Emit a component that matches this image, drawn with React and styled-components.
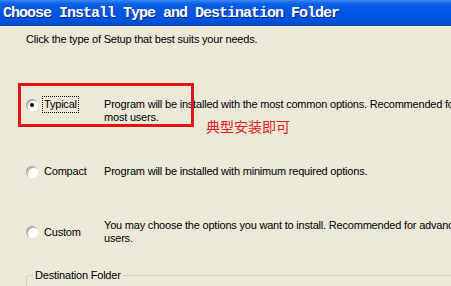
import React from "react";
import styled, { createGlobalStyle } from "styled-components";

const Global = createGlobalStyle`
  html, body { margin: 0; padding: 0; }
  body {
    width: 451px;
    height: 286px;
    overflow: hidden;
    background: #ece9d8;
    font-family: "Liberation Sans", Arial, sans-serif;
    font-size: 11px;
    letter-spacing: -0.2px;
    color: #000;
  }
`;

const Page = styled.div`
  position: relative;
  width: 451px;
  height: 286px;
  overflow: hidden;
  background: #ece9d8;
`;

const TitleBar = styled.div`
  height: 26px;
  display: flex;
  align-items: center;
  padding-left: 3px;
  background: linear-gradient(
    to bottom,
    #3b86f0 0px,
    #0a5fe8 4px,
    #0055e3 12px,
    #0050d8 22px,
    #0043b8 26px
  );
  border-bottom: 1px solid #f4f3ee;
`;

const Title = styled.div`
  font-family: "Liberation Mono", "Courier New", monospace;
  font-weight: bold;
  font-size: 15px;
  letter-spacing: -1px;
  color: #fff;
  white-space: nowrap;
  text-shadow: 1px 1px 0 #0a2a8a;
  padding-top: 1px;
`;

const Content = styled.div`
  display: flex;
  flex-direction: column;
  padding-left: 26px;
`;

const Intro = styled.div`
  margin-top: 6px;
  line-height: 13px;
  white-space: nowrap;
`;

const OptionRow = styled.div`
  display: flex;
  align-items: ${(p) => (p.$center ? "center" : "flex-start")};
  margin-top: ${(p) => p.$gap}px;
`;

const Choice = styled.div`
  width: 78px;
  display: flex;
  align-items: center;
  gap: 6px;
  height: 13px;
  flex: none;
`;

const Radio = styled.span`
  position: relative;
  width: 12px;
  height: 12px;
  border-radius: 50%;
  background: #fff;
  box-shadow: inset 1px 1px 0 #a8a8a0, inset 2px 2px 0 #c8c8c0,
    inset -1px -1px 0 #ffffff;
  flex: none;
  &::after {
    content: "";
    display: ${(p) => (p.$checked ? "block" : "none")};
    position: absolute;
    left: 4px;
    top: 4px;
    width: 4px;
    height: 4px;
    border-radius: 50%;
    background: #000;
  }
`;

const Label = styled.span`
  white-space: nowrap;
  line-height: 13px;
  padding: 1px 1px;
  margin: -2px -2px;
  border: 1px dotted ${(p) => (p.$focus ? "#000" : "transparent")};
`;

const Desc = styled.div`
  display: flex;
  flex-direction: column;
  line-height: 13px;
  white-space: nowrap;
`;

const GroupBox = styled.fieldset`
  margin: 24px 0 0 0;
  padding: 0;
  height: 40px;
  border: 1px solid #d0d0bf;
  border-bottom: none;
  border-right: none;
  border-radius: 3px 0 0 0;
  & > legend {
    padding: 0 2px;
    margin-left: 6px;
    line-height: 13px;
  }
`;

const MarkBox = styled.div`
  position: absolute;
  left: 18px;
  top: 83px;
  width: 170px;
  height: 38px;
  border: 3px solid #e31414;
`;

const MarkNote = styled.div`
  position: absolute;
  left: 206px;
  top: 118px;
  font-family: "Noto Sans CJK SC", sans-serif;
  font-size: 14px;
  line-height: 16px;
  letter-spacing: 0;
  color: #e31c1c;
  white-space: nowrap;
`;

const options = [
  {
    key: "typical",
    label: "Typical",
    checked: true,
    gap: 52,
    lines: [
      "Program will be installed with the most common options. Recommended for",
      "most users.",
    ],
  },
  {
    key: "compact",
    label: "Compact",
    gap: 41,
    lines: ["Program will be installed with minimum required options."],
  },
  {
    key: "custom",
    label: "Custom",
    gap: 41,
    center: true,
    lines: [
      "You may choose the options you want to install. Recommended for advanced",
      "users.",
    ],
  },
];

export default function App() {
  return (
    <>
      <Global />
      <Page>
        <TitleBar>
          <Title>Choose Install Type and Destination Folder</Title>
        </TitleBar>
        <Content>
          <Intro>Click the type of Setup that best suits your needs.</Intro>
          {options.map((o) => (
            <OptionRow key={o.key} $gap={o.gap} $center={o.center}>
              <Choice>
                <Radio $checked={o.checked} />
                <Label $focus={o.checked}>{o.label}</Label>
              </Choice>
              <Desc>
                {o.lines.map((l) => (
                  <span key={l}>{l}</span>
                ))}
              </Desc>
            </OptionRow>
          ))}
          <GroupBox>
            <legend>Destination Folder</legend>
          </GroupBox>
        </Content>
        <MarkBox />
        <MarkNote>典型安装即可</MarkNote>
      </Page>
    </>
  );
}
